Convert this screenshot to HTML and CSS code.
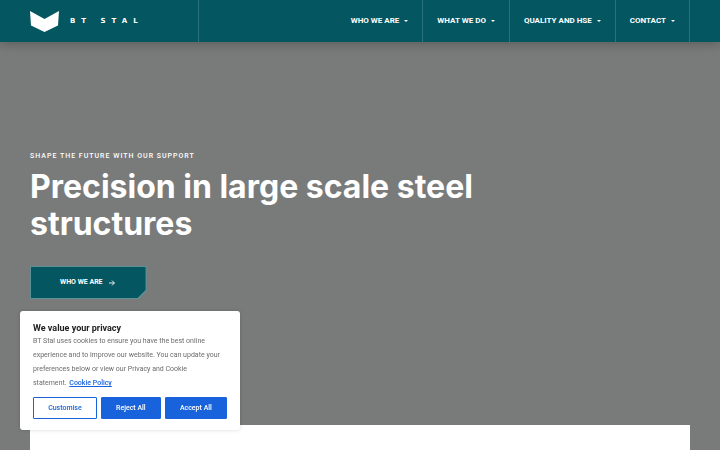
FILE: index.html
```html
<!DOCTYPE html>
<html lang="en">
<head>
  <meta charset="UTF-8">
  <title>BT Stal</title>
  <meta name="viewport" content="width=device-width, initial-scale=1.0">
  <link rel="stylesheet" href="styles.css">
</head>
<body>

  <header class="header">
    <a class="logo" href="#">
      <svg class="logo-mark" viewBox="0 0 29 21" aria-hidden="true">
        <path d="M0 0 L14.5 8 L29 0 L28 14.5 L14.5 21 L1 14.5 Z" fill="#fff"/>
      </svg>
      <span class="logo-text">BT STAL</span>
    </a>
    <nav class="nav">
      <a href="#">WHO WE ARE <span class="caret"></span></a>
      <a href="#">WHAT WE DO <span class="caret"></span></a>
      <a href="#">QUALITY AND HSE <span class="caret"></span></a>
      <a href="#">CONTACT <span class="caret"></span></a>
    </nav>
  </header>

  <main class="main">
    <section class="hero">
      <p class="tagline">SHAPE THE FUTURE WITH OUR SUPPORT</p>
      <h1>Precision in large scale steel structures</h1>
      <a class="hero-btn" href="#">
        <span class="hero-btn-inner">
          WHO WE ARE
          <svg class="arrow" viewBox="0 0 6 6" aria-hidden="true">
            <path d="M0 3 H5.4 M3 0.6 L5.4 3 L3 5.4" fill="none" stroke="#fff" stroke-width="0.9"/>
          </svg>
        </span>
      </a>
    </section>
    <section class="panel"></section>
  </main>

  <!-- cookie banner -->
  <div class="cookie" role="dialog" aria-labelledby="cookie-title">
    <h2 id="cookie-title">We value your privacy</h2>
    <p>BT Stal uses cookies to ensure you have the best online experience and to improve our website. You can update your preferences below or view our Privacy and Cookie <span class="keep">statement. <a href="#">Cookie Policy</a></span></p>
    <div class="cookie-buttons">
      <button class="btn btn-outline" type="button">Customise</button>
      <button class="btn" type="button">Reject All</button>
      <button class="btn" type="button">Accept All</button>
    </div>
  </div>

</body>
</html>
```

FILE: styles.css
```css
* {
  box-sizing: border-box;
}
body {
  margin: 0;
  min-height: 100vh;
  display: flex;
  flex-direction: column;
  font-family: Roboto, "Liberation Sans", sans-serif;
  color: #fff;
  background: #797b7a;
}
a {
  color: inherit;
  text-decoration: none;
}

/* header */
.header {
  display: flex;
  justify-content: space-between;
  padding: 0 30px;
  background: #045661;
  box-shadow: 0 2px 10px rgba(0,0,0,0.25);
}
.logo {
  display: flex;
  align-items: center;
  gap: 11px;
  width: 169px;
  border-right: 1px solid #2b727b;
}
.logo-mark {
  width: 29px;
  height: 21px;
}
.logo-text {
  font-family: "DejaVu Sans", sans-serif;
  font-size: 7px;
  font-weight: 700;
  letter-spacing: 6px;
  white-space: nowrap;
}
.nav {
  display: flex;
}
.nav a {
  display: flex;
  align-items: center;
  padding: 0 14px;
  border-right: 1px solid #2b727b;
  font-size: 8px;
  font-weight: 700;
  line-height: 42px;
  white-space: nowrap;
}
.caret {
  margin-left: 5px;
  border: 2px solid transparent;
  border-top-color: #fff;
  border-bottom: 0;
}

/* hero */
.main {
  flex: 1;
  display: flex;
  flex-direction: column;
  padding: 0 30px;
}
.hero {
  padding: 109px 0 126px;
}
.tagline {
  margin: 0;
  font-size: 7px;
  font-weight: 500;
  line-height: 10px;
  letter-spacing: 1px;
}
h1 {
  max-width: 480px;
  margin: 7px 0 24px;
  font-family: Inter, sans-serif;
  font-size: 32px;
  font-weight: 700;
  line-height: 37px;
}
.hero-btn {
  display: inline-block;
  padding: 1px;
  background: #5d9097;
  clip-path: polygon(0 0, 100% 0, 100% calc(100% - 8px), calc(100% - 8px) 100%, 0 100%);
  font-size: 7px;
  font-weight: 700;
}
.hero-btn-inner {
  display: flex;
  align-items: center;
  gap: 6px;
  padding: 0 31px 0 29px;
  line-height: 31px;
  background: #045661;
  clip-path: polygon(0 0, 100% 0, 100% calc(100% - 8px), calc(100% - 8px) 100%, 0 100%);
}
.arrow {
  width: 6px;
  height: 6px;
}
.panel {
  flex: 1;
  min-height: 25px;
  background: #fff;
}

/* cookie banner */
.cookie {
  position: fixed;
  left: 20px;
  bottom: 20px;
  width: 220px;
  padding: 12px 13px 11px;
  border-radius: 3px;
  color: #212121;
  background: #fff;
  box-shadow: 0 0 4px rgba(0,0,0,0.15);
}
.cookie h2 {
  margin: 0;
  font-size: 9px;
  font-weight: 700;
  line-height: 11px;
}
.cookie p {
  margin: 0 0 7px;
  font-size: 7px;
  line-height: 14px;
  color: #6c6c6c;
}
.keep {
  white-space: nowrap;
}
.cookie p a {
  margin-left: 1px;
  color: #1863dc;
  font-weight: 500;
  text-decoration: underline;
}
.cookie-buttons {
  display: flex;
  gap: 4px;
}
.btn {
  flex: 1 1 auto;
  padding: 0 10px;
  border: 1px solid #1863dc;
  border-radius: 1px;
  font-family: inherit;
  font-size: 7px;
  font-weight: 500;
  line-height: 20px;
  color: #fff;
  background: #1863dc;
}
.btn-outline {
  color: #1863dc;
  background: #fff;
}
```
